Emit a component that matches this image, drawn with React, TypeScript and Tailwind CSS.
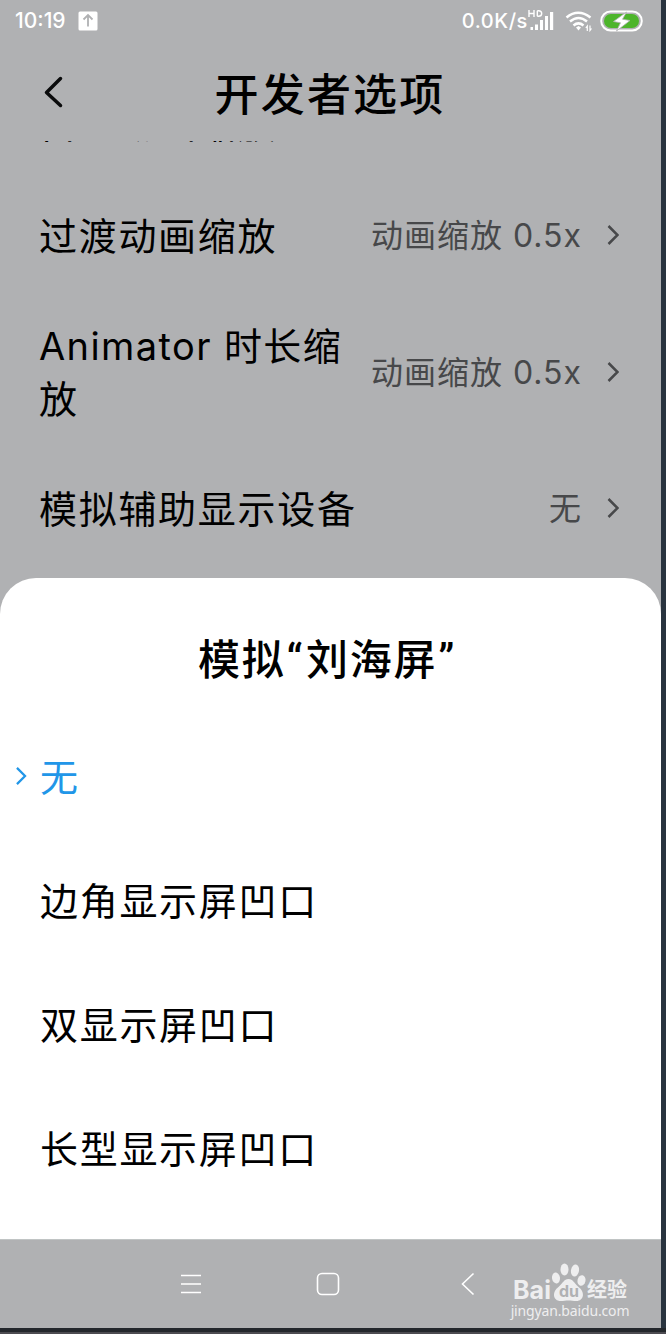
import type { ReactNode } from "react";

const settings = [
  { label: "过渡动画缩放", value: "动画缩放 0.5x", className: "h-[110px] tracking-[1.7px]" },
  { label: "Animator 时长缩放", value: "动画缩放 0.5x", className: "h-[163px] tracking-[1.4px]" },
  { label: "模拟辅助显示设备", value: "无", className: "h-[110px] tracking-[1.7px]" },
];

const options = ["无", "边角显示屏凹口", "双显示屏凹口", "长型显示屏凹口"];

const StatusBar = () => (
  <div className="flex h-10 shrink-0 items-center justify-between pt-px pl-[15px] pr-[18px] text-white">
    <div className="flex items-center gap-[12px]">
      <span className="text-[21px] leading-none font-medium">10:19</span>
      <svg className="h-5 w-5" viewBox="0 0 20 20" fill="none">
        <rect x="0.5" y="0.5" width="19" height="19" rx="1.5" fill="#fff" />
        <path d="M10 15.5V4.5M5.5 8.5 10 4l4.5 4.5" stroke="#b0b1b3" strokeWidth="1.8" />
      </svg>
    </div>
    <div className="flex items-center">
      <span className="text-[20px] leading-none font-medium tracking-[0.6px]">0.0K/s</span>
      <svg className="h-6 w-7" viewBox="0 0 28 24" fill="#fff">
        <path
          d="M1 1v7M6 1v7M1 4.500h5M9.300 1.700v5.600M9.300 1.700h1.200q3.200 0 3.200 2.800t-3.200 2.800H9.300"
          fill="none"
          stroke="#fff"
          strokeWidth="1.4"
        />
        <rect x="2.500" y="18" width="2.500" height="3" />
        <rect x="7" y="15.500" width="3" height="5.500" />
        <rect x="12" y="11" width="3" height="10" />
        <rect x="17" y="7" width="3" height="14" />
        <rect x="22" y="3" width="3.200" height="18" />
      </svg>
      <svg className="ml-[6px] h-6 w-8" viewBox="0 0 32 24" fill="none" stroke="#fff" strokeWidth="2.500">
        <path d="M4.500 8.500q11.500-9.500 24 0M8 12.500q8.500-7 17 0M11.500 16.500q5-4.200 10 0" />
        <path d="m14 18.500 2.500-1.500 2.500 1.500-2.500 3z" fill="#fff" stroke="none" />
        <path d="M25.300 22v-5l-1.500 2M28 16.500v5l1.500-2" strokeWidth="1.200" />
      </svg>
      <svg className="ml-[6px] h-[22px] w-[43px]" viewBox="0 0 43 22" fill="none">
        <rect x="1.200" y="1.500" width="40.600" height="19" rx="9.500" stroke="#fff" strokeWidth="2" />
        <rect x="4" y="4" width="35" height="14" rx="7" fill="#4db52b" />
        <path d="M26.500 2 13.500 11.500l7 1.300L16.500 21 30 10.500l-7.500-1.300z" fill="#fff" stroke="#b0b1b3" strokeWidth="0.800" />
      </svg>
    </div>
  </div>
);

const Chevron = ({ className }: { className: string }) => (
  <svg className={className} viewBox="0 0 12 20" fill="none" stroke="currentColor">
    <path d="M1.500 1 10.500 10 1.500 19" strokeWidth="2.500" />
  </svg>
);

const Row = ({ className, label, children }: { className: string; label: string; children?: ReactNode }) => (
  <div className={`flex shrink-0 items-center justify-between pr-[42px] pl-[39px] ${className}`}>
    <span className="max-w-[320px] text-[38px] leading-[53px] text-black">{label}</span>
    {children}
  </div>
);

const BaiduMark = () => (
  <div className="flex w-[120px] flex-col items-center text-[#eeeeef]">
    <div className="flex h-10 items-end">
      <span className="mb-[3px] text-[25px] leading-[20px] font-bold">Bai</span>
      <div className="relative h-10 w-9">
        <svg className="h-10 w-9" viewBox="0 0 36 40" fill="currentColor">
          <ellipse cx="5" cy="15" rx="4" ry="5.500" transform="rotate(-10 5 15)" />
          <ellipse cx="13.500" cy="6.500" rx="4" ry="6" />
          <ellipse cx="24" cy="7.500" rx="4" ry="6" transform="rotate(10 24 7.500)" />
          <ellipse cx="30.500" cy="17.500" rx="4" ry="5.300" transform="rotate(12 30.500 17.500)" />
          <path d="M17.500 16c4.500 0 6 4.500 9.500 7.500 8 6 5.500 14.500-1.500 14.500-3.500 0-5-.5-8-.5s-4.500.5-8 .5C2.500 38 0 29.500 8 23.500 11.500 20.500 13 16 17.500 16z" />
        </svg>
        <span className="absolute top-[20px] left-[8px] text-[16px] leading-[16px] font-bold text-[#b0b1b3]">du</span>
      </div>
      <span className="mb-[3px] text-[20px] leading-[20px] font-bold">经验</span>
    </div>
    <span className="font-['Noto_Sans'] text-[14px] leading-[15px] tracking-[-0.15px]">jingyan.baidu.com</span>
  </div>
);

export default function App() {
  return (
    <div className="flex h-[1334px] w-[666px] flex-col overflow-hidden bg-[#29343f] font-[Inter,'Noto_Sans_CJK_SC',sans-serif]">
      <div className="flex h-[1328px] w-[661px] flex-col bg-[#b0b1b3]">
        <StatusBar />

        <header className="relative flex h-[101px] shrink-0 items-center justify-center">
          <svg
            className="absolute top-[36px] left-[43px] h-8 w-5"
            viewBox="0 0 20 32"
            fill="none"
            stroke="#0a0b0c"
            strokeWidth="3.5"
            strokeLinecap="round"
            strokeLinejoin="round"
          >
            <path d="M17.500 2.500 3.500 16.500l14 13" />
          </svg>
          <h1 className="mt-[8px] pr-px text-[44px] leading-none font-medium tracking-[2.2px] text-black">开发者选项</h1>
        </header>

        <main className="flex h-[437px] shrink-0 flex-col overflow-hidden">
          {/* scrolled under the header, only its lower edge shows */}
          <div className="flex h-10 shrink-0 items-end overflow-hidden pb-[2px]">
            <Row className="h-[110px] tracking-[1.7px]" label="窗口动画缩放" />
          </div>
          {settings.map((item) => (
            <Row key={item.label} className={item.className} label={item.label}>
              <span className="flex items-center gap-[25px] text-[#47484a]">
                <span className="text-[32px] tracking-[1px]">{item.value}</span>
                <Chevron className="mb-[2px] h-5 w-3" />
              </span>
            </Row>
          ))}
        </main>

        <div className="h-[661px] shrink-0 bg-[#b0b1b3]">
          <section className="h-full rounded-t-[36px] bg-white">
            <h2 className="flex h-[137px] items-center justify-center pt-[25px] pr-[7px] text-[42px] font-medium tracking-[1.7px] text-black">
              模拟<span className="pl-px font-[Roboto]">“</span>
              <span className="pl-[2px]">刘海屏</span>
              <span className="pl-px font-[Roboto]">”</span>
            </h2>
            <ul>
              {options.map((name, i) => (
                <li
                  key={name}
                  className={`flex h-[124px] items-center text-[38px] tracking-[1.7px] ${i === 0 ? "text-[#2196e8]" : "text-black"}`}
                >
                  <span className="w-10 pl-[15px]">{i === 0 && <Chevron className="mb-[2px] h-[18px] w-[12px]" />}</span>
                  {name}
                </li>
              ))}
            </ul>
          </section>
        </div>

        <nav className="flex h-[89px] shrink-0 items-center border-t border-[#c0c4c4] pl-[180px] text-white">
          <svg className="h-6 w-[22px]" viewBox="0 0 22 24" stroke="currentColor" strokeWidth="1.6">
            <path d="M1 3.500h20M1 12h20M1 20.500h20" />
          </svg>
          <svg className="ml-[114px] h-6 w-6" viewBox="0 0 24 24" fill="none" stroke="currentColor" strokeWidth="1.6">
            <rect x="1.500" y="1.500" width="21" height="21" rx="4.500" />
          </svg>
          <svg className="ml-[121px] h-6 w-[14px]" viewBox="0 0 14 24" fill="none" stroke="currentColor" strokeWidth="1.6">
            <path d="M12.500 1.500 1.500 12l11 10.500" />
          </svg>
          <div className="ml-[35px] pt-[12px]">
            <BaiduMark />
          </div>
        </nav>
      </div>
      <div className="h-1 bg-[#23272c]" />
      <div className="h-[2px] bg-[#4c4b51]" />
    </div>
  );
}
